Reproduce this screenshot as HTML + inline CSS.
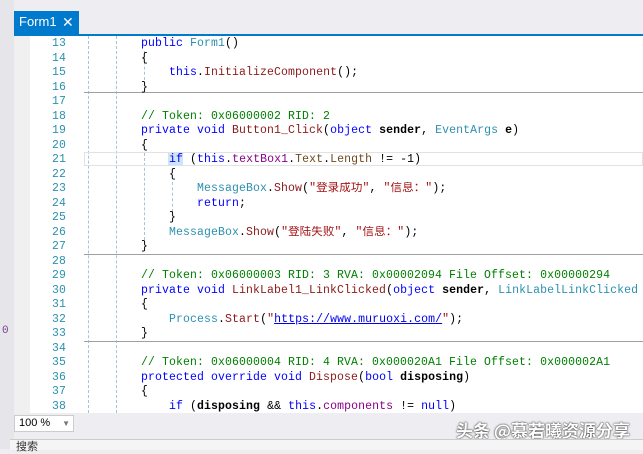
<!DOCTYPE html>
<html><head><meta charset="utf-8"><style>
body{margin:0;width:643px;height:449px;overflow:hidden;background:#eeeef2;position:relative;font-family:"Liberation Mono","Noto Sans CJK SC",monospace}
.l{position:absolute;left:0;height:14.5px;line-height:14.5px;font-size:11.5px;letter-spacing:0.1px;white-space:pre;width:643px;overflow:hidden}
.n{position:absolute;left:30px;width:36px;text-align:right;color:#2b91af}
.c{position:absolute;left:141px;color:#000}
.k{color:#0000ff}.t{color:#2b91af}.g{color:#008000}.m{color:#8a1a1a}.p{color:#8b008b}.s{color:#a31515}.pr{color:#6f4a1f}.b{font-weight:bold}
.u{color:#0000ee;text-decoration:underline}
.hr{position:absolute;left:84px;right:0;height:1px;background:#a0a0a0}
.v{position:absolute;width:0;border-left:1px dashed #a8c4d8}
</style></head><body>
<div style="position:absolute;left:0;top:0;width:14px;height:449px;background:#e6e6ea"></div>
<div style="position:absolute;left:2px;top:325px;font-size:11px;color:#7a3f8f;font-family:'Liberation Mono',monospace">0</div>
<div style="position:absolute;left:14px;top:0;width:629px;height:36px;background:#eeeef2"></div>
<div style="position:absolute;left:14px;top:11px;width:65px;height:24px;background:#007acc;color:#fff;font:13px 'Liberation Sans',sans-serif;line-height:22px"><span style="margin-left:5px">Form1</span><span style="position:absolute;left:48px;top:0;font-size:14px">✕</span></div>
<div style="position:absolute;left:14px;top:34px;width:629px;height:2px;background:#007acc"></div>
<div style="position:absolute;left:14px;top:36px;width:16px;height:377px;background:#f0f0f0"></div>
<div style="position:absolute;left:30px;top:36px;width:613px;height:377px;background:#fff"></div>
<div class="v" style="left:88px;top:36px;height:377px"></div>
<div class="v" style="left:116px;top:36px;height:377px"></div>
<div class="v" style="left:144px;top:51px;height:29px"></div>
<div class="v" style="left:144px;top:153px;height:87px"></div>
<div class="v" style="left:172px;top:182px;height:30px"></div>
<div style="position:absolute;left:84px;top:152px;width:559px;height:14px;border:1px solid #e2e2e2;box-sizing:border-box"></div>
<div style="position:absolute;left:168px;top:153px;width:15px;height:13px;background:#cfe4f7"></div>
<div class="hr" style="top:92px"></div>
<div class="hr" style="top:254px"></div>
<div class="hr" style="top:341px"></div>
<div class="l" style="top:37px"><span class="n">13</span><span class="c"><span class="k">public</span> <span class="t">Form1</span>()</span></div>
<div class="l" style="top:51.5px"><span class="n">14</span><span class="c">{</span></div>
<div class="l" style="top:66px"><span class="n">15</span><span class="c">    <span class="k">this</span>.<span class="m">InitializeComponent</span>();</span></div>
<div class="l" style="top:80.5px"><span class="n">16</span><span class="c">}</span></div>
<div class="l" style="top:95px"><span class="n">17</span></div>
<div class="l" style="top:109.5px"><span class="n">18</span><span class="c g">// Token: 0x06000002 RID: 2</span></div>
<div class="l" style="top:124px"><span class="n">19</span><span class="c"><span class="k">private void</span> <span class="m">Button1_Click</span>(<span class="k">object</span> <span class="b">sender</span>, <span class="t">EventArgs</span> <span class="b">e</span>)</span></div>
<div class="l" style="top:138.5px"><span class="n">20</span><span class="c">{</span></div>
<div class="l" style="top:153px"><span class="n">21</span><span class="c">    <span class="k">if</span> (<span class="k">this</span>.<span class="p">textBox1</span>.<span class="pr">Text</span>.<span class="pr">Length</span> != -1)</span></div>
<div class="l" style="top:167.5px"><span class="n">22</span><span class="c">    {</span></div>
<div class="l" style="top:182px"><span class="n">23</span><span class="c">        <span class="t">MessageBox</span>.<span class="m">Show</span>(<span class="s">"登录成功"</span>, <span class="s">"信息："</span>);</span></div>
<div class="l" style="top:196.5px"><span class="n">24</span><span class="c">        <span class="k">return</span>;</span></div>
<div class="l" style="top:211px"><span class="n">25</span><span class="c">    }</span></div>
<div class="l" style="top:225.5px"><span class="n">26</span><span class="c">    <span class="t">MessageBox</span>.<span class="m">Show</span>(<span class="s">"登陆失败"</span>, <span class="s">"信息："</span>);</span></div>
<div class="l" style="top:240px"><span class="n">27</span><span class="c">}</span></div>
<div class="l" style="top:254.5px"><span class="n">28</span></div>
<div class="l" style="top:269px"><span class="n">29</span><span class="c g">// Token: 0x06000003 RID: 3 RVA: 0x00002094 File Offset: 0x00000294</span></div>
<div class="l" style="top:283.5px"><span class="n">30</span><span class="c"><span class="k">private void</span> <span class="m">LinkLabel1_LinkClicked</span>(<span class="k">object</span> <span class="b">sender</span>, <span class="t">LinkLabelLinkClicked</span></span></div>
<div class="l" style="top:298px"><span class="n">31</span><span class="c">{</span></div>
<div class="l" style="top:312.5px"><span class="n">32</span><span class="c">    <span class="t">Process</span>.<span class="m">Start</span>(<span class="s">"<span class="u">https://www.muruoxi.com/</span>"</span>);</span></div>
<div class="l" style="top:327px"><span class="n">33</span><span class="c">}</span></div>
<div class="l" style="top:341.5px"><span class="n">34</span></div>
<div class="l" style="top:356px"><span class="n">35</span><span class="c g">// Token: 0x06000004 RID: 4 RVA: 0x000020A1 File Offset: 0x000002A1</span></div>
<div class="l" style="top:370.5px"><span class="n">36</span><span class="c"><span class="k">protected override void</span> <span class="m">Dispose</span>(<span class="k">bool</span> <span class="b">disposing</span>)</span></div>
<div class="l" style="top:385px"><span class="n">37</span><span class="c">{</span></div>
<div class="l" style="top:399.5px"><span class="n">38</span><span class="c">    <span class="k">if</span> (<span class="b">disposing</span> &amp;&amp; <span class="k">this</span>.<span class="p">components</span> != <span class="k">null</span>)</span></div>
<div style="position:absolute;left:14px;top:413px;width:629px;height:22px;background:#eeeef2"></div>
<div style="position:absolute;left:14px;top:415px;width:60px;height:17px;background:#fff;border:1px solid #ccc;box-sizing:border-box;font:11px 'Liberation Sans',sans-serif;line-height:15px"><span style="margin-left:4px">100 %</span><span style="position:absolute;right:3px;top:0;color:#777;font-size:8px">▼</span></div>
<div style="position:absolute;left:456px;top:417px;font:bold 17px 'Noto Sans CJK SC',sans-serif;color:#fff;text-shadow:0 0 2px #444,0 0 1px #222">头条 @慕若曦资源分享</div>
<div style="position:absolute;left:10px;top:439px;width:633px;height:10px;background:#f5f5f5;border-top:1px solid #ccc"></div>
<div style="position:absolute;left:16px;top:440px;font:11px 'Noto Sans CJK SC',sans-serif;color:#333;line-height:12px">搜索</div>
</body></html>
